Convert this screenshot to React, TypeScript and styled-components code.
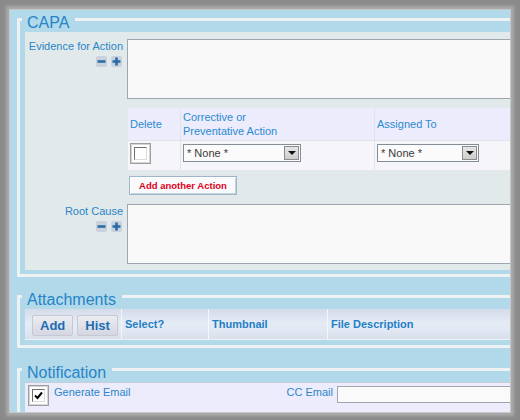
import React from "react";
import styled, { createGlobalStyle } from "styled-components";

const GlobalStyle = createGlobalStyle`
  html, body {
    margin: 0;
    padding: 0;
  }
  body {
    background: #8a8a8a;
    font-family: "Liberation Sans", Arial, sans-serif;
    font-size: 11px;
  }
`;

const LINE = "#eef2f2";
const BLUE = "#2a86c8";

const Frame = styled.div`
  margin: 10px;
  width: 500px;
  height: 402px;
  box-sizing: border-box;
  overflow: hidden;
  background: #b1d9ea;
  padding: 8px 0 0 7px;
  box-shadow: 0 0 0 1px #c6c6c6, 0 0 3px 4px #ababab;
`;

const Section = styled.section<{ $gap?: number; $padBottom?: number }>`
  width: 520px;
  box-sizing: border-box;
  border: 3px solid ${LINE};
  border-top: none;
  padding: 0 5px ${(p) => p.$padBottom ?? 4}px;
  margin-top: ${(p) => p.$gap ?? 0}px;
`;

const SectionHead = styled.div`
  display: flex;
  align-items: flex-start;
  height: 14px;
  margin: 0 -5px;

  &::before {
    content: "";
    width: 2px;
    height: 3px;
    background: ${LINE};
  }
  &::after {
    content: "";
    flex: 1;
    height: 3px;
    background: ${LINE};
  }
`;

const Legend = styled.span`
  font-size: 16px;
  line-height: 18px;
  margin-top: -4px;
  padding: 0 6px 0 5px;
  color: #2784c8;
`;

const Panel = styled.div`
  background: #e1e9eb;
  padding: 7px 0 6px;
  display: grid;
  grid-template-columns: 98px 1fr;
  column-gap: 4px;
  row-gap: 9px;
`;

const FieldLabel = styled.div`
  display: flex;
  flex-direction: column;
  align-items: flex-end;
  gap: 3px;
  padding-top: 1px;
  color: ${BLUE};
  line-height: 13px;
`;

const IconRow = styled.div`
  display: flex;
  gap: 4px;
  padding-right: 1px;
`;

const TextBox = styled.div`
  height: 60px;
  box-sizing: border-box;
  background: #f9f9f9;
  border: 1px solid #9ea7b0;
`;

const ActionsBlock = styled.div`
  display: flex;
  flex-direction: column;
  align-items: flex-start;
  gap: 6px;
`;

const Grid = styled.div`
  margin-left: 1px;
  display: grid;
  grid-template-columns: 52px 193px 200px;
  grid-template-rows: 32px 29px;
  gap: 1px;
  background: #dde5ec;
`;

const HeadCell = styled.div`
  background: #ececfd;
  color: #2b8bd0;
  padding: 0 2px;
  display: flex;
  align-items: center;
  line-height: 14px;
`;

const BodyCell = styled.div`
  background: #f5f5fa;
  padding: 2px 2px 0;
  display: flex;
  align-items: flex-start;
`;

const SelectBox = styled.div<{ $w: number }>`
  width: ${(p) => p.$w}px;
  height: 18px;
  margin-top: 1px;
  box-sizing: border-box;
  border: 1px solid #858d95;
  background: #fbfbfb;
  display: flex;
  align-items: center;
  justify-content: space-between;
  padding-left: 3px;
  color: #3a3a3a;
`;

const DropBtn = styled.span`
  width: 15px;
  height: 14px;
  margin-right: 1px;
  box-sizing: border-box;
  border: 1px solid #8c8c8c;
  background: linear-gradient(#e6e6e6, #cdcdcd);
  display: flex;
  align-items: center;
  justify-content: center;

  &::after {
    content: "";
    border-left: 4px solid transparent;
    border-right: 4px solid transparent;
    border-top: 4px solid #111;
  }
`;

const CheckOuter = styled.span`
  width: 21px;
  height: 21px;
  box-sizing: border-box;
  border: 1px solid #9e9e9e;
  box-shadow: inset 0 0 0 1px #d4d4d4;
  background: #fff;
  display: flex;
  align-items: center;
  justify-content: center;
  flex: none;
`;

const CheckInner = styled.span`
  width: 13px;
  height: 13px;
  box-sizing: border-box;
  border: 1px solid;
  border-color: #6e6e6e #dcdcdc #dcdcdc #6e6e6e;
  background: #fff;
  display: flex;
  align-items: center;
  justify-content: center;
`;

const AddActionButton = styled.button`
  margin-left: 2px;
  width: 108px;
  height: 19px;
  padding: 0;
  box-sizing: border-box;
  border: 1px solid #9fb6c9;
  box-shadow: inset 1px 1px 0 #fff, inset -1px -1px 0 #c3d2de;
  background: #f8fafc;
  color: #e0001a;
  font-family: "Liberation Sans", Arial, sans-serif;
  font-weight: bold;
  font-size: 9.5px;
`;

const Toolbar = styled.div`
  display: grid;
  grid-template-columns: 97px 87px 119px 1fr;
  height: 30px;
  background: linear-gradient(#d4dbe9, #e5ebf5 45%, #e3e9f4 70%, #d7dfeb);
  border-bottom: 1px solid #eef2f7;
`;

const ToolCell = styled.div<{ $buttons?: boolean }>`
  display: flex;
  align-items: center;
  gap: 4px;
  padding-left: ${(p) => (p.$buttons ? 7 : 3)}px;
  border-right: 1px solid #f3f6fb;
  color: #1e7fc6;
  font-weight: bold;
  font-size: 11px;
`;

const ToolButton = styled.button`
  height: 21px;
  padding: 0 7px;
  border: 1px solid #c6c8d4;
  border-radius: 2px;
  background: linear-gradient(#ececf2, #d6d6e2);
  color: #1b6fb2;
  font-family: "Liberation Sans", Arial, sans-serif;
  font-weight: bold;
  font-size: 13px;
  margin-top: 2px;
`;

const NotifyRow = styled.div`
  display: grid;
  grid-template-columns: 29px 279px 200px;
  align-items: start;
  background: #ececfd;
  border-top: 1px solid #c8ccd8;
  padding-top: 2px;
  height: 40px;
`;

const CheckCell = styled.div`
  padding-left: 3px;
`;

const NotifyLabels = styled.div`
  display: flex;
  justify-content: space-between;
  margin-top: 1px;
  line-height: 13px;
  color: ${BLUE};
`;

const EmailInput = styled.div`
  margin: 1px 0 0 4px;
  height: 17px;
  box-sizing: border-box;
  border: 1px solid #a2a6ac;
  background: #fafafa;
`;

function StepIcon({ plus }: { plus?: boolean }) {
  return (
    <svg width="11" height="11" viewBox="0 0 11 11">
      <rect x="0" y="0" width="11" height="11" rx="2" fill="#cbd1dc" />
      <rect x="1.5" y="4.2" width="8" height="2.6" fill="#2a6ea8" />
      {plus && <rect x="4.2" y="1.5" width="2.6" height="8" fill="#2a6ea8" />}
    </svg>
  );
}

function CheckBox({ checked }: { checked?: boolean }) {
  return (
    <CheckOuter>
      <CheckInner>
        {checked && (
          <svg width="9" height="9" viewBox="0 0 9 9">
            <polyline points="1,4.5 3.5,7 8,1.5" fill="none" stroke="#000" strokeWidth="2" />
          </svg>
        )}
      </CheckInner>
    </CheckOuter>
  );
}

function Select({ width }: { width: number }) {
  return (
    <SelectBox $w={width}>
      * None *
      <DropBtn />
    </SelectBox>
  );
}

export default function App() {
  return (
    <>
      <GlobalStyle />
      <Frame>
        <Section>
          <SectionHead>
            <Legend>CAPA</Legend>
          </SectionHead>
          <Panel>
            <FieldLabel>
              Evidence for Action
              <IconRow>
                <StepIcon />
                <StepIcon plus />
              </IconRow>
            </FieldLabel>
            <TextBox />
            <span />
            <ActionsBlock>
              <Grid>
                <HeadCell>Delete</HeadCell>
                <HeadCell>
                  Corrective or
                  <br />
                  Preventative Action
                </HeadCell>
                <HeadCell>Assigned To</HeadCell>
                <BodyCell>
                  <CheckBox />
                </BodyCell>
                <BodyCell>
                  <Select width={118} />
                </BodyCell>
                <BodyCell>
                  <Select width={102} />
                </BodyCell>
              </Grid>
              <AddActionButton>Add another Action</AddActionButton>
            </ActionsBlock>
            <FieldLabel>
              Root Cause
              <IconRow>
                <StepIcon />
                <StepIcon plus />
              </IconRow>
            </FieldLabel>
            <TextBox />
          </Panel>
        </Section>

        <Section $gap={18} $padBottom={5}>
          <SectionHead>
            <Legend>Attachments</Legend>
          </SectionHead>
          <Toolbar>
            <ToolCell $buttons>
              <ToolButton>Add</ToolButton>
              <ToolButton>Hist</ToolButton>
            </ToolCell>
            <ToolCell>Select?</ToolCell>
            <ToolCell>Thumbnail</ToolCell>
            <ToolCell>File Description</ToolCell>
          </Toolbar>
        </Section>

        <Section $gap={20}>
          <SectionHead>
            <Legend>Notification</Legend>
          </SectionHead>
          <NotifyRow>
            <CheckCell>
              <CheckBox checked />
            </CheckCell>
            <NotifyLabels>
              <span>Generate Email</span>
              <span>CC Email</span>
            </NotifyLabels>
            <EmailInput />
          </NotifyRow>
        </Section>
      </Frame>
    </>
  );
}
